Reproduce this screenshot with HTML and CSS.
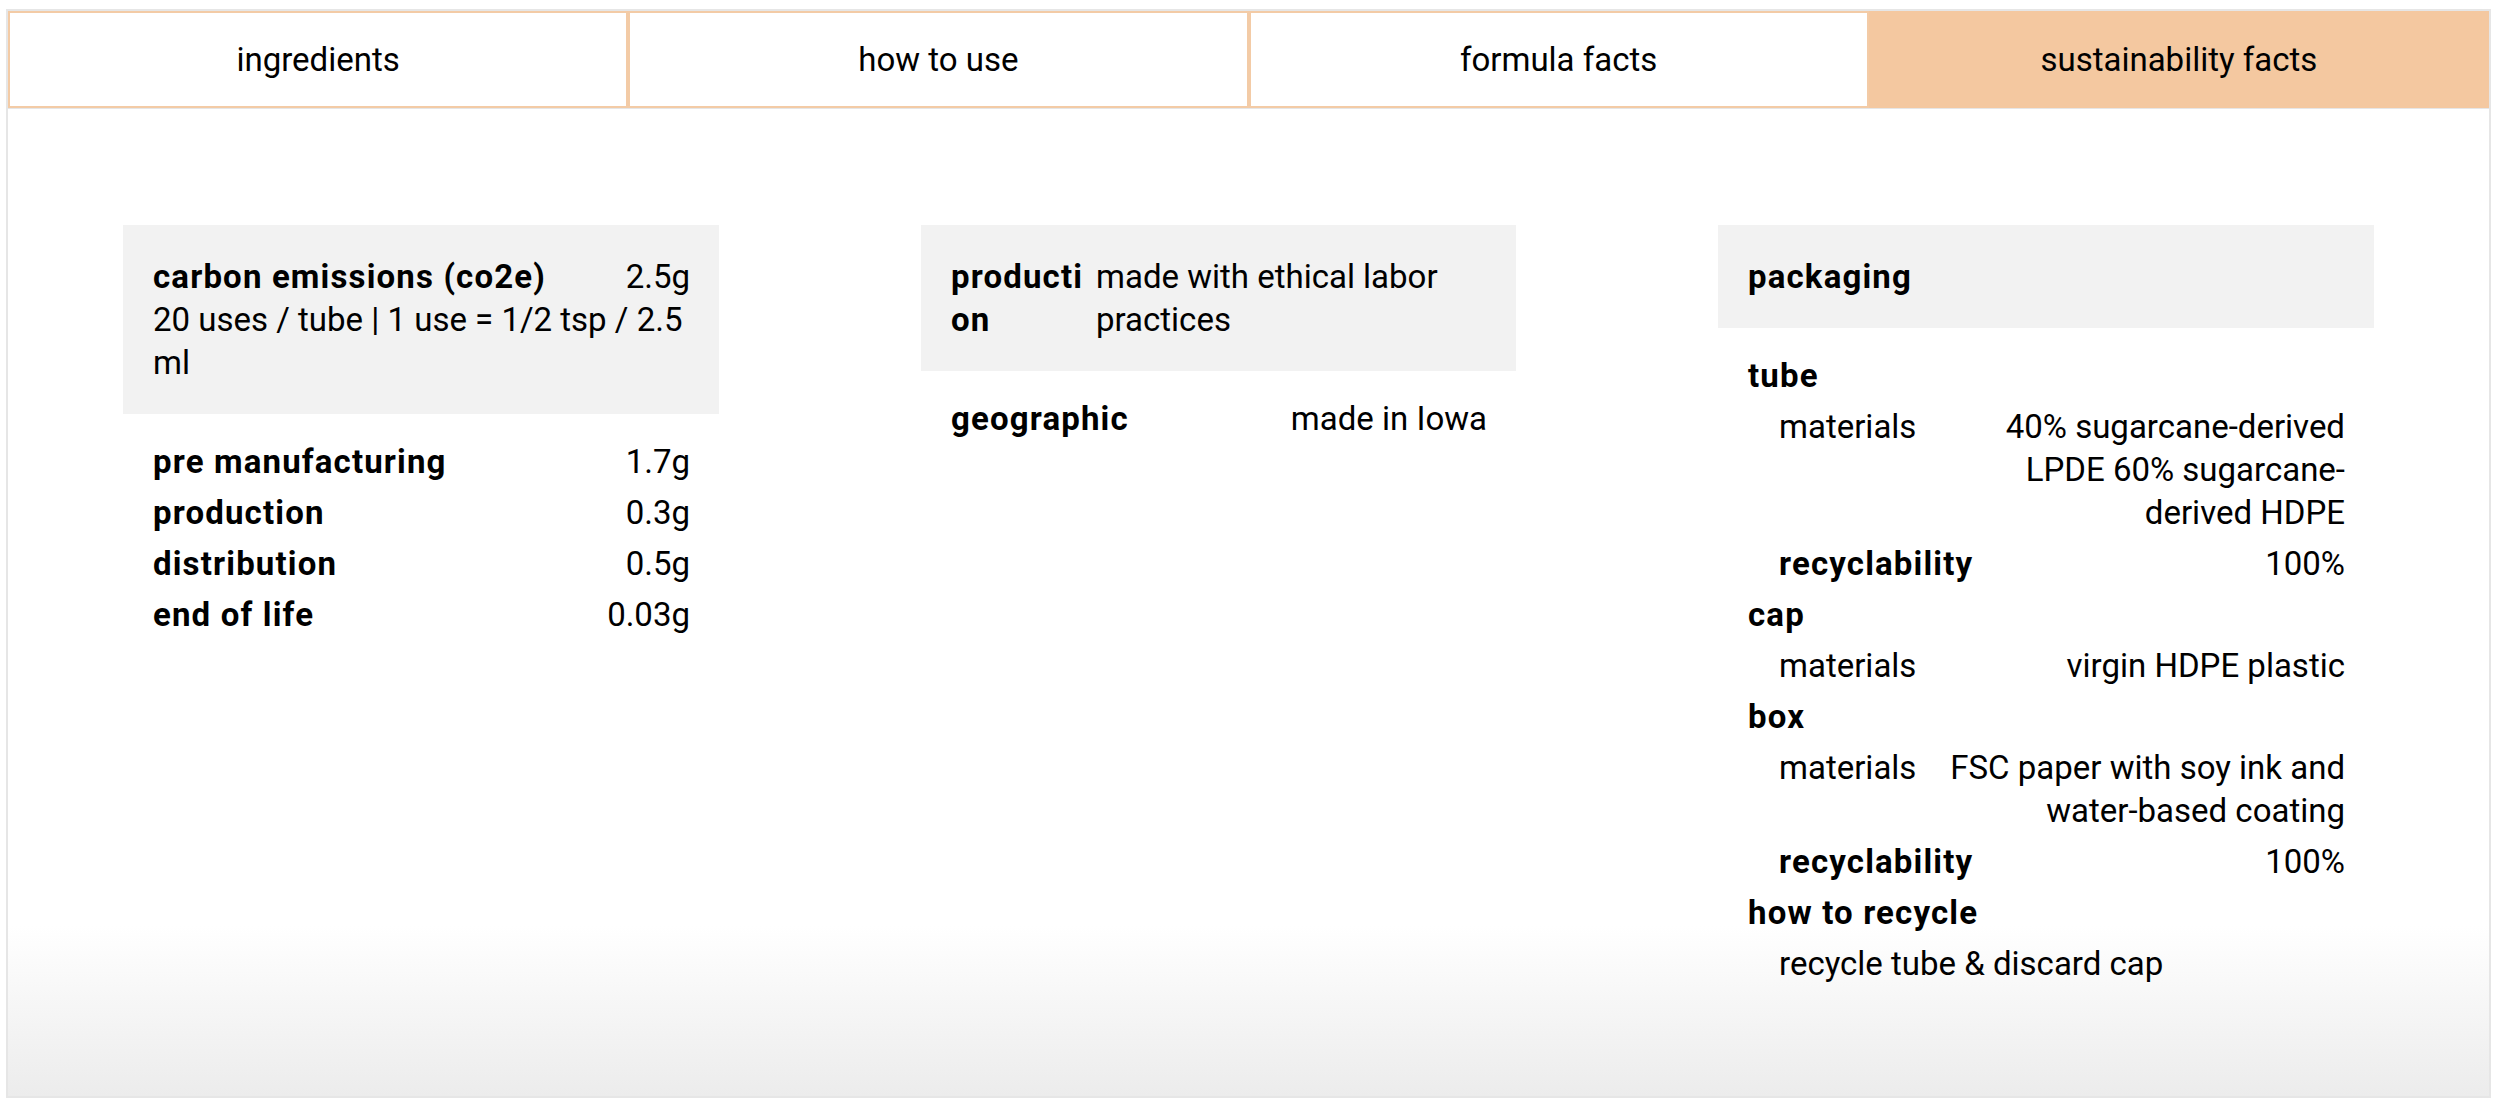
FILE: index.html
```html
<!DOCTYPE html>
<html lang="en">
<head>
<meta charset="utf-8">
<title>sustainability facts</title>
<link rel="stylesheet" href="styles.css">
</head>
<body>
<div class="panel">
  <div class="tabs">
    <div class="tab">ingredients</div>
    <div class="tab">how to use</div>
    <div class="tab">formula facts</div>
    <div class="tab active">sustainability facts</div>
  </div>
  <div class="content">
    <section class="col">
      <div class="head">
        <div class="head-row"><span class="label">carbon emissions (co2e)</span><span class="value">2.5g</span></div>
        <div class="note">20 uses / tube | 1 use = 1/2 tsp / 2.5 ml</div>
      </div>
      <div class="list">
        <div class="item"><span class="label">pre manufacturing</span><span class="value">1.7g</span></div>
        <div class="item"><span class="label">production</span><span class="value">0.3g</span></div>
        <div class="item"><span class="label">distribution</span><span class="value">0.5g</span></div>
        <div class="item"><span class="label">end of life</span><span class="value">0.03g</span></div>
      </div>
    </section>
    <section class="col">
      <div class="head head-grid">
        <span class="label narrow">production</span><span class="desc">made with ethical labor practices</span>
      </div>
      <div class="list">
        <div class="item"><span class="label">geographic</span><span class="value">made in Iowa</span></div>
      </div>
    </section>
    <section class="col">
      <div class="head"><span class="label">packaging</span></div>
      <div class="list">
        <div class="item"><span class="label">tube</span></div>
        <div class="item sub"><span class="name">materials</span><span class="value wrap">40% sugarcane-derived LPDE 60% sugarcane-derived HDPE</span></div>
        <div class="item sub"><span class="label">recyclability</span><span class="value">100%</span></div>
        <div class="item"><span class="label">cap</span></div>
        <div class="item sub"><span class="name">materials</span><span class="value wrap">virgin HDPE plastic</span></div>
        <div class="item"><span class="label">box</span></div>
        <div class="item sub"><span class="name">materials</span><span class="value wrap">FSC paper with soy ink and water-based coating</span></div>
        <div class="item sub"><span class="label">recyclability</span><span class="value">100%</span></div>
        <div class="item"><span class="label">how to recycle</span></div>
        <div class="item sub"><span class="name">recycle tube &amp; discard cap</span></div>
      </div>
    </section>
  </div>
</div>
</body>
</html>
```
FILE: styles.css
```css
html, body {
  margin: 0;
  padding: 0;
  background: #ffffff;
}

body {
  font-family: Roboto, "Liberation Sans", Arial, sans-serif;
  color: #000;
  font-size: 33px;
  line-height: 43px;
}

.panel {
  box-sizing: border-box;
  margin: 9px 0 0 6px;
  width: 2485px;
  height: 1089px;
  border: 2px solid #e6e6e6;
  background: linear-gradient(to bottom, #ffffff 0, #ffffff calc(100% - 170px), #ececec 100%);
  overflow: hidden;
}

.tabs {
  display: grid;
  grid-template-columns: repeat(4, 1fr);
  border-bottom: 1px solid #e6e6e6;
}

.tab {
  box-sizing: border-box;
  height: 97px;
  border: 2px solid #f3cba6;
  background: #ffffff;
  display: flex;
  align-items: center;
  justify-content: center;
  font-size: 33px;
}

.tab.active {
  background: #f4c8a0;
  border-color: #f4c8a0;
}

.content {
  display: grid;
  grid-template-columns: 596px 595px 1fr;
  column-gap: 202px;
  padding: 116px 115px 0 115px;
  align-items: start;
}

.head {
  background: #f2f2f2;
  padding: 30px 29px 30px 30px;
}

.head-row {
  display: flex;
  justify-content: space-between;
}

.col:first-child .head {
  padding-right: 0;
}

.col:first-child .head-row {
  padding-right: 29px;
}

.head-grid {
  display: grid;
  grid-template-columns: 140px 1fr;
  column-gap: 5px;
}

.label {
  font-weight: 700;
  letter-spacing: 1.15px;
}

.narrow {
  word-break: break-all;
}

.list {
  padding: 22px 29px 0 30px;
}

.item {
  display: flex;
  justify-content: space-between;
  align-items: flex-start;
  padding: 4px 0;
}

.item.sub {
  padding-left: 31px;
}

.name {
  flex-shrink: 0;
}

.value.wrap {
  max-width: 395px;
  text-align: right;
}
```
